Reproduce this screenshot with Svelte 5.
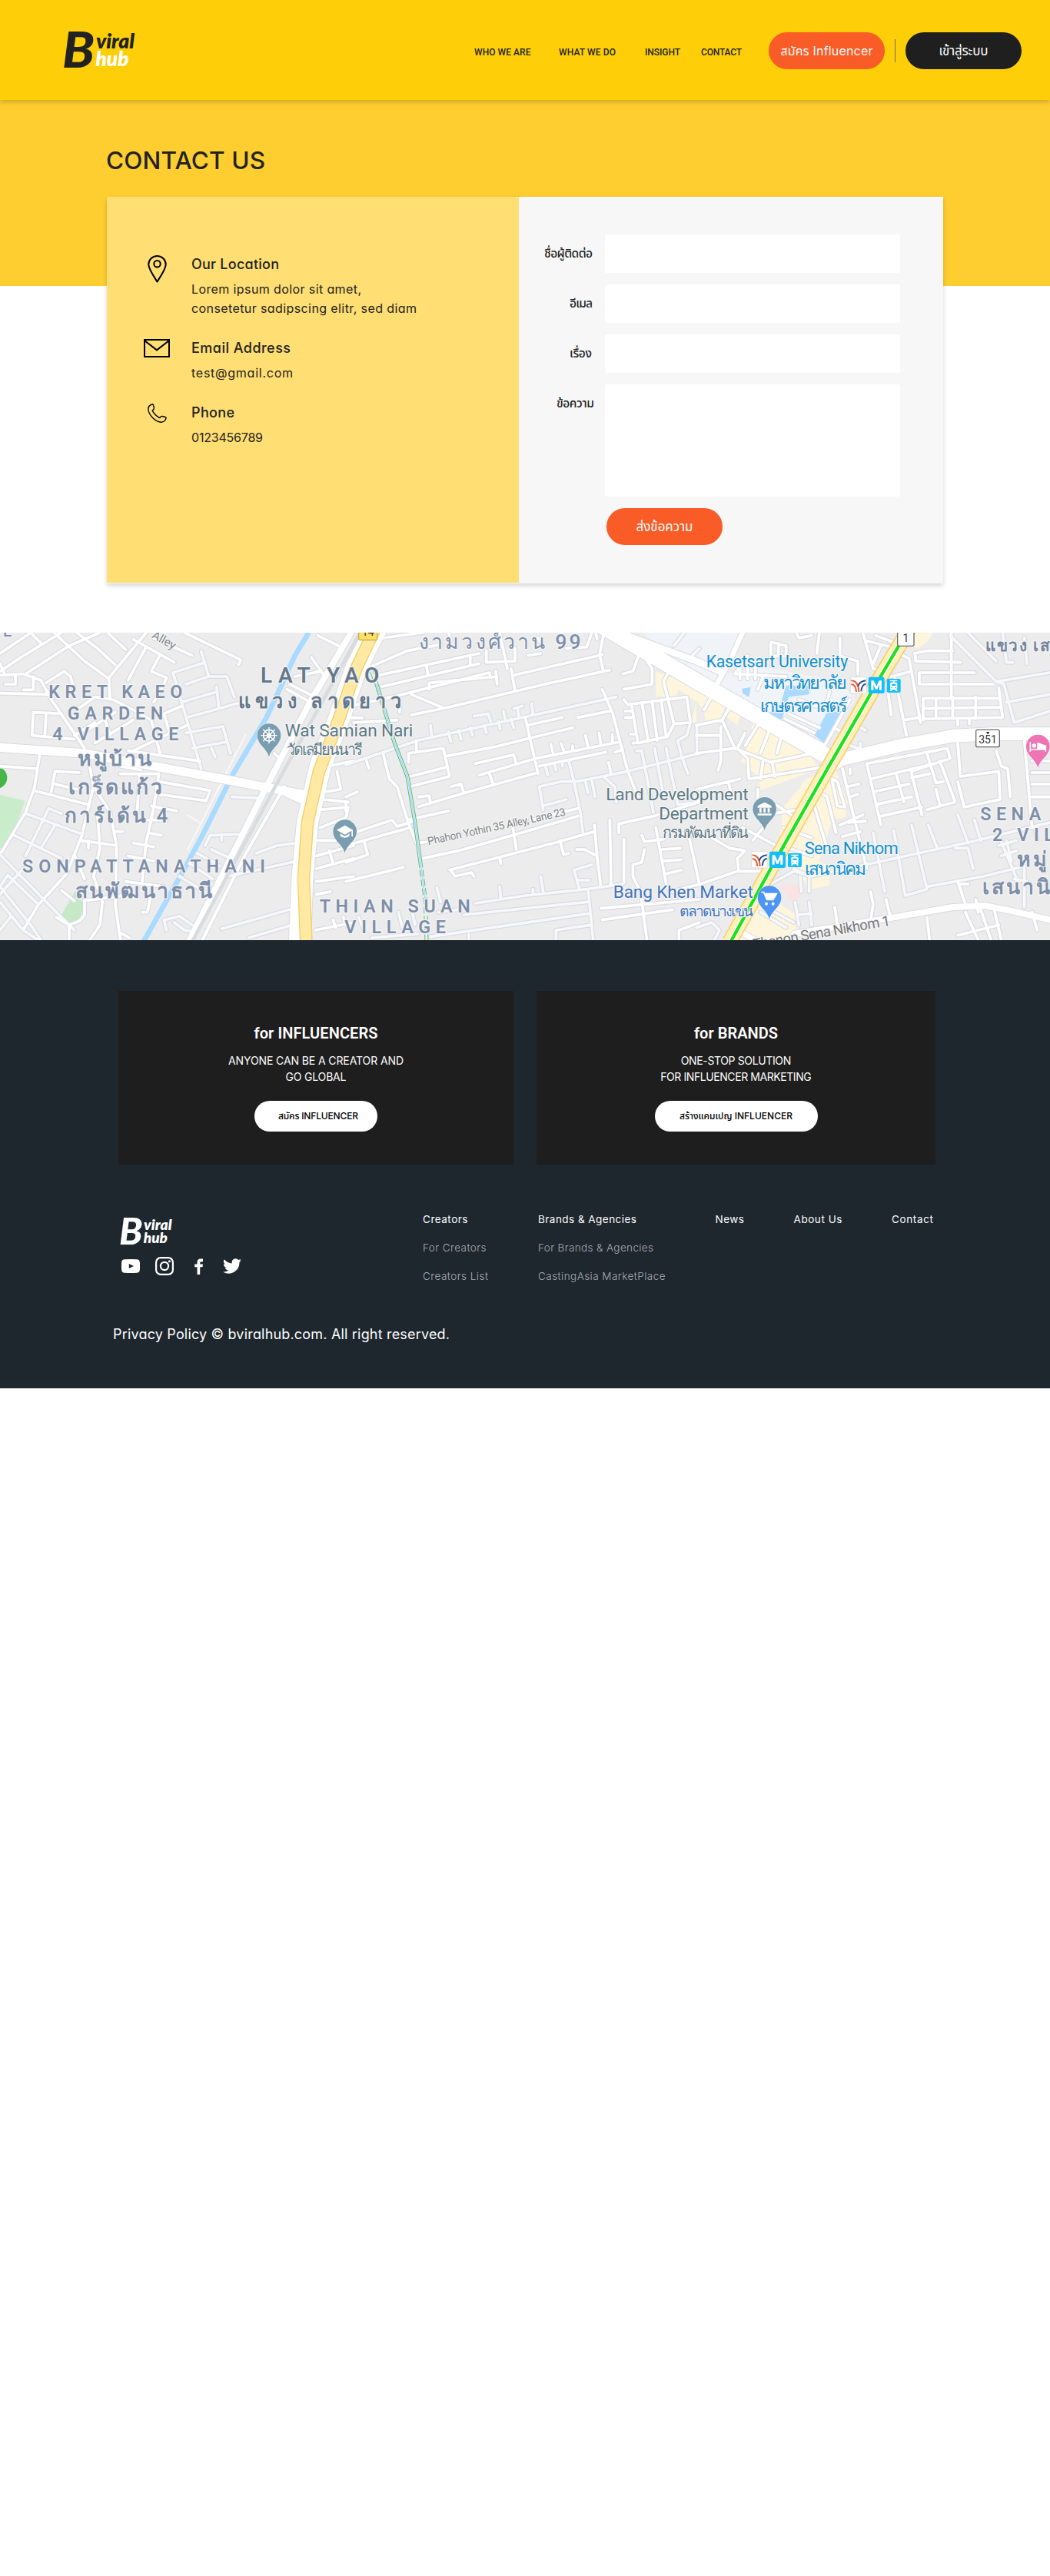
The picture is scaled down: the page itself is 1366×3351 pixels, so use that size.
<script>
  // Spreads a line of text over a given width with letter spacing.
  function fit(node, width) {
    node.style.letterSpacing = '0px';
    const a = node.getBoundingClientRect().width;
    node.style.letterSpacing = '1px';
    const glyphs = node.getBoundingClientRect().width - a;
    const s = glyphs > 1 ? (width - a) / (glyphs - 1) : 0;
    node.style.letterSpacing = `${s}px`;
    node.style.marginRight = `${-s}px`;
  }

  const nav = [['WHO WE ARE', 73.5], ['WHAT WE DO', 74], ['INSIGHT', 46], ['CONTACT', 53]];

  const contacts = [
    { icon: 'pin', title: ['Our Location', 114], lines: [['Lorem ipsum dolor sit amet,', 221], ['consetetur sadipscing elitr, sed diam', 293]] },
    { icon: 'mail', title: ['Email Address', 129], lines: [['test@gmail.com', 132]] },
    { icon: 'phone', title: ['Phone', 56], lines: [['0123456789', 93]] }
  ];

  const fields = [
    { label: 'ชื่อผู้ติดต่อ', w: 63, end: 0 },
    { label: 'อีเมล', w: 30, end: 0 },
    { label: 'เรื่อง', w: 29, end: 1 },
    { label: 'ข้อความ', w: 49, end: -2, tall: true }
  ];

  const promos = [
    { title: ['for INFLUENCERS', 161], lines: [['ANYONE CAN BE A CREATOR AND', 228], ['GO GLOBAL', 79]], cta: ['สมัคร INFLUENCER', 104], wide: false },
    { title: ['for BRANDS', 109], lines: [['ONE-STOP SOLUTION', 143.5], ['FOR INFLUENCER MARKETING', 196.5]], cta: ['สร้างแคมเปญ INFLUENCER', 147], wide: true }
  ];

  const links = [
    [['Creators', 58.5], ['For Creators', 82.5], ['Creators List', 85]],
    [['Brands & Agencies', 128], ['For Brands & Agencies', 150], ['CastingAsia MarketPlace', 165.5]],
    [['News', 37.5]],
    [['About Us', 63]],
    [['Contact', 54]]
  ];

  // The map is kept as three tiles, drawn at a third of their own units.
  const tiles = [
    {
      x: 0,
      roads: [
        'M0 190L90 130 240 39M120 39L160 80M100 200L270 90 390 39M210 39L330 150 420 215M300 39L380 100 450 165M420 39L490 105M570 39L425 215 430 300M520 65L680 155M570 95L500 225M625 125L590 190 650 215 640 240 600 310M720 39L940 145 930 165M600 60L750 128',
        'M0 205L90 200 160 225 200 300 330 490M0 275L190 280M60 205V240H20M130 210V262H90M180 235L250 190 275 210 290 260M0 120L120 39M0 160L20 205',
        'M675 195L800 155M785 112L815 210 725 240M675 195L785 570M815 210L885 210 915 290M710 310L845 270M845 250L855 335 730 370M855 335L960 305M725 430L870 405 900 510M750 490L885 465M825 490L840 525',
        'M130 350L240 355M130 350L125 440 290 455M180 355L175 440M300 340L370 290 440 300 520 340 590 380 625 510M290 440L370 390M340 420L450 350M400 350L430 440M370 470L520 380M520 500L730 400M640 355L710 325M640 355L665 440M500 500L780 540',
        'M0 560L140 570M155 515L135 640 100 740 10 890 0 900M200 660L215 580 310 585M215 630L300 650M130 655L345 710M350 560L365 640 345 720 320 830 260 980 150 1100 90 1200',
        'M100 745L320 825M190 725L100 910M215 790L160 880M190 725L240 745M55 830L240 920M0 905L180 1090 290 1200M30 985L150 1100M0 1030L120 1180 160 1239M90 1200L150 1239M0 1090L90 1200M40 1150L0 1200M90 960L0 1060M0 1030L30 985',
        'M365 640L430 740 455 870 450 1100 470 1239M380 740L390 880 365 990 400 1090 390 1180 350 1239M315 850L455 870M345 850V880M290 905L330 1000M240 1045L290 1085M330 1085V1140L310 1165 270 1180 220 1150M270 1180V1239M455 815H480M470 1210L505 1230',
        'M470 590H620L600 720 570 860 555 1010M620 620L820 655 805 695 620 670M590 715L690 735M575 770H650M580 820L630 830M520 860L600 875M500 910L600 930M490 1010L640 1030M545 590L535 740M470 560L550 575M330 1085L520 1060M590 1060L575 1130H555',
        'M905 680L1020 685M800 870L820 830 950 825M865 830V850M825 885L900 920M770 900L860 950M740 940L830 1000M700 990L800 1050M1000 900L1080 870 1160 860M890 990L1160 930M865 1195L1130 1120M970 1230L1140 1180M640 1160L700 1145 750 1180M640 1160L650 1200M680 1170L720 1200 750 1205',
        'M1120 260L1210 310M1130 240L1230 290M1150 210L1250 190M1215 135L1260 200M1240 50L1320 90M1070 510L1090 530',
        'M1280 560L1380 540M1315 580L1330 650 1270 660M1265 690L1360 700M1250 730L1360 720 1350 760 1250 800M1240 850L1320 850M1235 910L1380 870M1235 960L1380 920M1285 890L1300 940M1235 1060L1290 1050M1235 1010L1380 990M1230 1200L1380 1170M1300 1160L1310 1190M1340 1150L1350 1180'
      ],
      wide: [
        { d: 'M0 487L330 510 600 560 870 610 1180 670', w: 34 },
        { d: 'M1370 39L1210 310 1040 640 950 820 740 1239', w: 24 },
        { d: 'M1110 640L960 900 790 1239', w: 12 },
        { d: 'M1090 655L1190 700', w: 24 },
        { d: 'M1475 10L1385 190 1325 370 1250 560 1200 780 1180 1000 1170 1239', w: 84 }
      ]
    },
    {
      x: 450,
      roads: [
        'M100 170L240 110 370 85M130 205L520 120M140 250L520 160M485 125V160M315 170L320 205M140 60L300 39M0 330L200 285 560 195 565 215M325 260V235L590 210M585 190L590 240M255 280L375 330M400 39L410 70',
        'M255 360L400 330 800 235 1030 185M655 205L1000 125M645 180L660 265M1005 50L990 125 1005 190M548 110V155L660 150M600 39L630 180M660 100V150M710 128L760 120M975 39L980 65M750 60L770 95M860 100L940 95 960 39',
        'M0 555L280 460 690 370 1055 290M330 400L335 445M400 425L410 465M440 420L450 455M485 410L495 440M500 365L555 355 565 385M540 400L548 430M595 385L602 415M645 375L655 410M615 345L622 380M725 315L730 360M655 335L690 325M670 330L675 370',
        'M700 370L750 590M710 400L845 370M720 450L885 410M395 520L580 485 720 450M905 370L1030 345M1000 260L1040 350 1100 580 1140 680M740 530L1070 465M755 560L1015 505M800 475L810 515M840 470L852 505M885 480V495M935 440L945 485M988 430L995 475M1040 435V465M1050 505L1080 495M1025 545L1035 590',
        'M505 550L655 515 665 550M520 595L740 530M560 590L575 630M285 718L460 665 750 585M410 640L450 630 460 665M285 680L325 675 330 705M245 545V510L380 490 405 600 250 640M250 600L390 565M275 460V500',
        'M770 730L755 640 840 620 900 620 1100 580 1380 510M870 540L890 620 915 740 925 820M780 565L788 595M815 555L820 575M845 550V560M935 620L945 665M960 615L972 680M1010 605L1050 640 1055 700M770 715L860 690',
        'M240 770L400 735M0 830L180 770 200 795 265 775M145 510L170 610 200 640 240 770 275 860 320 855M0 870L250 800M70 850L85 905 0 935M0 1010L225 955M80 540L90 570M0 680L45 660M30 390L200 380M210 330V350M0 370L65 372M0 735V700',
        'M300 920L440 890 650 830 905 755M650 790L665 885M720 770L905 725M405 965L600 915 830 855 970 815M410 965L425 990 490 975 500 990M600 915L605 940M835 850L850 905 870 900M970 790L980 910 995 1030M900 885L930 885 980 910',
        'M505 1095L700 1065 940 1040 1080 1020M600 1030L605 1080M760 990L770 1050M730 1040V1060M890 965L960 945M890 965L910 1035M900 1005H950M460 1140L940 1090M330 1225L950 1135M355 1035L370 1090M360 1130L440 1120M820 1200L955 1180M820 1200V1239M945 1040L965 1239M480 1215V1239M100 1230L280 1215M205 1130L220 1190M255 1110L270 1180M50 1150L70 1200',
        'M1030 770L1035 1020M1085 845V1015M1065 820V785L1200 755 1380 700M1155 830L1165 855 1240 845M1210 800L1250 1020M1235 885L1305 880M1240 930L1310 925M1250 980L1310 965M1165 885L1155 935 1120 945 1120 990 1150 1050 1175 1239M995 1115L1380 1080M1000 1160L1275 1120M1300 1239V1200L1380 1170M1340 840L1380 1020M1270 1050L1380 1020',
        'M1080 200L1120 190 1140 135M1170 140L1195 180V240L1085 260M1085 300L1100 320 1330 290 1345 390 1280 395M1115 320L1140 470 1255 445 1280 395 1255 290M1155 310L1180 465M1195 305L1215 460M1230 300L1250 445M1090 345H1115M1090 370H1120M1110 435H1130M1255 200L1240 230 1255 290M1120 470L1140 468',
        'M1135 500L1155 500 1200 740M1205 490L1235 650M1250 490L1295 710 1380 700M1345 390L1330 440 1295 460 1310 520 1335 590M1370 400V510M1320 39L1280 90M1380 100L1350 130'
      ],
      wide: []
    },
    {
      x: 906,
      roads: [
        'M480 39L470 120M0 510L150 490 100 380 130 330M150 490L200 510 290 545 500 500M30 340L70 270M100 380L0 400M95 405V540L85 575M190 430L160 490 200 530 205 610 490 565M240 400L190 480M285 420L250 510M330 450L315 510M260 540L250 610M295 540L305 600M0 650L170 610M125 620L135 665M0 440H95',
        'M0 700L30 690M180 800L330 880M240 650V690M310 710L400 770M340 800L450 840M330 870L450 910M270 750L400 730M220 850L260 800M0 1025L160 970 300 970M60 840L130 880 190 890 160 920 165 970',
        'M290 1020L380 970 450 990 820 910 1050 860 1380 780M380 960L440 990M405 990L410 1050M440 1000V1050M385 1090L400 1180M440 1090L450 1180M400 1140L450 1135M250 1130L350 1190M270 1110L380 1170M0 1190L60 1170 90 1200 70 1239',
        'M650 39L690 180M660 70L760 95M700 50L780 80M690 180L710 185M720 90L690 160M560 60V130L630 150V200M290 75L350 90V130H290V75M320 80V130M390 39L400 60 450 50M150 200L350 210M170 170V220M200 170V220M230 170V220M260 210L240 260M200 130L150 200M345 375L460 430M360 355L480 410M340 390L500 480 600 300M540 410L570 430M400 300L500 340M520 270L500 340',
        'M770 110L830 140 875 390M740 210L760 360M775 215L820 440M760 210L840 190M810 380L870 370M850 120L900 110H1000M855 130V150L1030 155M870 195L1085 195M870 200V240L1160 240M995 39V290M885 295H1180M885 295V380M885 335L1185 330M890 375L1195 370 1180 255M935 295V375M1000 290V375M1090 290V375M1020 375V400M1065 375V395',
        'M990 50L1170 230 1380 195M1195 39L1210 155H1235M1170 230L1200 240 1240 390 1380 345M1210 310L1380 280M1060 39L1170 150M1280 60L1290 160M640 410L660 420M600 480L630 490M640 470V500',
        'M1020 470L1030 600 1180 580 1185 690 1045 720 1020 620M1170 500L1190 560 1215 570 1225 680M1280 460L1310 800M1310 540H1380M1310 585H1380M1310 630H1380M1310 680H1380',
        'M570 570L610 740 665 960M510 600L550 620 580 720 550 715 530 615M480 660L510 680 545 820M455 700L510 880M665 550L720 790M590 640L635 630M600 680L630 670M560 790L650 750M570 835L640 815M595 780L660 775M665 550L980 490 990 530 840 580M680 610L930 550M690 660L830 630M700 710L840 680M720 755L880 720M780 590L810 700M835 570L880 750M900 510L935 625 965 620M950 540L1010 700 900 730M935 650L950 710M840 605L910 590M600 570V590',
        'M690 820L735 1050M770 810L815 1065 900 1040 840 790M905 790L940 880M1020 750L1060 860M900 1030L1120 990 1280 950M1085 770L1110 850M1010 880H1060L1080 960M1180 830L1250 1000M1180 870L1250 850M1190 910L1250 890M1210 850L1230 930M1240 1000L1290 1010M1280 960V1110M1320 800L1330 850',
        'M740 1080L760 1160M680 1050L690 1100 680 1160M540 1110L550 1180M900 1150L910 1239M1020 1010L1050 1100M1090 1080L1100 1130M1050 1130L1100 1239M1110 1120L1150 1239M1160 1110L1190 1239M1020 1220L1180 1180M1030 1020H1060M1310 1130L1330 1200'
      ],
      wide: [
        { d: 'M-368 15L0 150 90 190', w: 26 },
        { d: 'M180 39L130 150 80 240', w: 20 },
        { d: 'M-400 -5L0 228 500 515 545 540', w: 62 },
        { d: 'M540 540L800 478 1000 442 1150 434H1380', w: 50 },
        { d: 'M380 1215L560 1185 800 1145 1000 1110 1130 1105 1230 1125 1380 1160', w: 24 },
        { d: 'M160 1200L240 1245', w: 22 }
      ]
    }
  ];

  const slate = '#7d8fa9';
  const teal = '#5d7b85';
  const sky = '#1390cf';
  const blue = '#4375bd';
  // [tile x, text, left, baseline, length, size, colour, weight]
  const places = [
    [0, 'E', 12, 55, 36, 60, slate, 500],
    [0, 'KRET KAEO', 190, 295, 522, 70, slate, 600],
    [0, 'GARDEN', 263, 377, 374, 70, slate, 600],
    [0, '4 VILLAGE', 205, 459, 492, 70, slate, 600],
    [0, 'หมู่บ้าน', 303, 557, 289, 80, slate, 600],
    [0, 'เกร็ดแก้ว', 268, 668, 364, 80, slate, 600],
    [0, 'การ์เด้น 4', 252, 779, 403, 78, slate, 600],
    [0, 'SONPATTANATHANI', 87, 976, 948, 70, slate, 600],
    [0, 'สนพัฒนาธานี', 293, 1073, 534, 80, slate, 600],
    [0, 'LAT YAO', 1017, 235, 463, 84, '#65788b', 600],
    [0, 'แขวง ลาดยาว', 930, 333, 635, 76, '#65788b', 600],
    [0, 'Wat Samian Nari', 1112, 445, 500, 68, teal, 400],
    [0, 'วัดเสมียนนารี', 1112, 517, 298, 60, teal, 400],
    [0, 'THIAN SUAN', 1247, 1130, 588, 70, slate, 600],
    [0, 'VILLAGE', 1345, 1212, 395, 70, slate, 600],
    [450, 'งามวงศ์วาน 99', 285, 103, 632, 80, slate, 500],
    [450, 'Land Development', 1015, 693, 556, 68, teal, 400],
    [450, 'Department', 1222, 768, 349, 68, teal, 400],
    [450, 'กรมพัฒนาที่ดิน', 1237, 840, 336, 60, teal, 400],
    [450, 'Bang Khen Market', 1043, 1075, 547, 68, blue, 400],
    [450, 'ตลาดบางเขน', 1302, 1147, 288, 58, blue, 400],
    [906, 'Kasetsart University', 38, 175, 554, 64, sky, 400],
    [906, 'มหาวิทยาลัย', 262, 257, 325, 70, sky, 500],
    [906, 'เกษตรศาสตร์', 248, 347, 344, 70, sky, 500],
    [906, 'Sena Nikhom', 422, 903, 366, 66, sky, 400],
    [906, 'เสนานิคม', 422, 983, 240, 68, sky, 500],
    [906, 'แขวง เส', 1128, 110, 252, 62, '#74859a', 600],
    [906, 'SENA', 1108, 772, 237, 70, slate, 600],
    [906, '2 VIL', 1155, 853, 240, 70, slate, 600],
    [906, 'หมู่', 1252, 950, 116, 80, slate, 600],
    [906, 'เสนานิ', 1117, 1060, 263, 80, slate, 600]
  ];

  const pins = [
    { x: 0, cx: 1050, cy: 440, fill: '#7a9eb0', kind: 'wheel' },
    { x: 0, cx: 1346, cy: 815, fill: '#7a9eb0', kind: 'cap' },
    { x: 906, cx: 266, cy: 727, fill: '#7a9eb0', kind: 'hall' },
    { x: 906, cx: 285, cy: 1073, fill: '#4c94f5', kind: 'cart' },
    { x: 906, cx: 1333, cy: 483, fill: '#ee74b4', kind: 'bed' }
  ];
  const stations = [[601, 212], [215, 893]];
  const at = (x) => `translate(${x} -13) scale(.33333)`;
</script>

{#snippet logo(dark, light)}
  <svg class="logo" viewBox="74 32 112 66" aria-label="Bviral hub">
    <text class="lb" x="81" y="88" font-size="65.5" textLength="42" lengthAdjust="spacingAndGlyphs" fill={dark}>B</text>
    <text class="lw" x="125" y="62.7" font-size="25.500" textLength="50" lengthAdjust="spacingAndGlyphs" fill={dark}>viral</text>
    <text class="lw" x="124.500" y="86" font-size="25.500" textLength="43" lengthAdjust="spacingAndGlyphs" fill={light}>hub</text>
  </svg>
{/snippet}

<div class="page">
  <header>
    <div class="home">{@render logo('#222', '#fff')}</div>
    <nav>
      {#each nav as [t, w]}<a href="#top"><span class="fit" use:fit={w}>{t}</span></a>{/each}
    </nav>
    <button class="pill orange"><span class="fit" use:fit={120}>สมัคร Influencer</span></button>
    <i class="sep"></i>
    <button class="pill black"><span class="fit" use:fit={64}>เข้าสู่ระบบ</span></button>
  </header>

  <section class="hero"><h1><span class="fit" use:fit={207}>CONTACT US</span></h1></section>

  <section class="card">
    <div class="info">
      {#each contacts as c}
        <div class="contact">
          <div class="ico">
            {#if c.icon === 'pin'}
              <svg width="25" height="36" viewBox="0 0 25 36" fill="none" stroke="#000" stroke-width="2"><path d="M12.5 34.5C10.5 31 1.3 18.5 1.3 12A11.2 11 0 0 1 23.7 12C23.7 18.5 14.5 31 12.5 34.5Z" stroke-linejoin="round" /><circle cx="12.5" cy="11.2" r="4.2" /></svg>
            {:else if c.icon === 'mail'}
              <svg width="34" height="24" viewBox="0 0 34 24" fill="none" stroke="#000" stroke-width="2"><path d="M1 1H33V23H1ZM1 2L17 14.4 33 2" /></svg>
            {:else}
              <svg width="25" height="25" viewBox="0 0 25 25" fill="none" stroke="#000" stroke-width="1.4" stroke-linejoin="round"><path d="M6.8.8C3 1.6.8 4 .9 7.2 1.4 15 10 23.8 17.8 24.2 21 24.3 23.7 21.8 24.2 18.2 22.5 17 19.5 16.2 17.6 16.6L15.8 18.6C12 17 7.6 12.6 6.2 9L8.2 7.2C8.6 5.2 8 2.4 6.8.8Z" /></svg>
            {/if}
          </div>
          <div>
            <h3><span class="fit" use:fit={c.title[1]}>{c.title[0]}</span></h3>
            {#each c.lines as [t, w]}<p><span class="fit" use:fit={w}>{t}</span></p>{/each}
          </div>
        </div>
      {/each}
    </div>
    <form>
      {#each fields as f}
        <label class:low={f.end > 0} class:over={f.end < 0}><span class="fit" use:fit={f.w}>{f.label}</span></label>
        <div class="box" class:tall={f.tall}></div>
      {/each}
      <button type="button" class="pill orange send"><span class="fit" use:fit={74}>ส่งข้อความ</span></button>
    </form>
  </section>

  <svg class="map" viewBox="0 0 1366 400">
    <rect width="1366" height="400" fill="#ececec" />
    <g transform={at(0)}>
      <path d="M0 672L98 695 60 800 10 880H0Z" fill="#c9edcb" />
      <path d="M295 1045L325 1100 315 1150 270 1175 235 1150Z" fill="#c5e8c5" />
      <circle cx="-15" cy="605" r="43" fill="#46b649" />
    </g>
    <g transform={at(906)}>
      <path d="M-210 39H180L120 200 250 170 560 230 620 300 500 480 -100 130Z" fill="#f0f3f7" />
      <path d="M-158 190L0 250V390H-20L0 310-70 260-78 285-158 290ZM0 190L60 220 120 300 90 390 40 390 30 350 0 300ZM120 320L175 350 160 400 120 370ZM220 390L440 510 480 570 250 655 240 600 175 540 200 480ZM340 700L430 610 540 570 590 700 580 760 530 770 480 930 520 950V1025L440 1040 400 980 320 880ZM270 1060L330 1100 390 1140V1239H150ZM850 39H925L900 75 870 100 820 90Z" fill="#fdf5dc" />
      <path d="M250 655L415 630 340 720 300 770 250 700Z" fill="#ececec" />
      <path d="M178 257L212 252 205 290 180 275ZM350 245H440V280L360 290 335 375 310 380 285 350 325 330ZM510 350L565 345 545 420 500 470 460 440Z" fill="#aadaff" />
      <path d="M315 1030L395 1018 408 1070 360 1085 350 1050Z" fill="#fbe3e3" />
    </g>
    <g transform={at(0)}>
      <path d="M1205 39L1150 130 1110 220 1040 370 910 590 880 650 790 830 720 960 560 1245" fill="none" stroke="#a9daff" stroke-width="20" />
      <path d="M960 435L730 890M730 750L780 780" fill="none" stroke="#fafafa" stroke-width="5" />
    </g>
    {#each tiles as t}
      <g transform={at(t.x)} class="casing">
        {#each t.roads as d}<path {d} stroke-width="18" />{/each}
        {#each t.wide as r}<path d={r.d} stroke-width={r.w + 6} />{/each}
      </g>
    {/each}
    {#each tiles as t}
      <g transform={at(t.x)} class="fill">
        {#each t.roads as d, i}<path {d} stroke-width="11" class:soft={i % 3 === 2} />{/each}
      </g>
    {/each}
    {#each tiles as t}
      <g transform={at(t.x)} class="fill">
        {#each t.wide as r}<path d={r.d} stroke-width={r.w} />{/each}
      </g>
    {/each}
    <g transform={at(0)} fill="none">
      <path d="M1405 39L1290 250 1090 610 750 1245" stroke="#d9dcde" stroke-width="14" />
      <path d="M1470 10L1390 180 1325 370 1245 580 1200 780 1185 1000 1195 1245" stroke="#f3cd68" stroke-width="50" />
      <path d="M1470 10L1390 180 1325 370 1245 580 1200 780 1185 1000 1195 1245" stroke="#ffe9a3" stroke-width="42" />
    </g>
    <g transform={at(450)} fill="none">
      <path d="M100 190L120 240 190 470 240 600 270 780 290 930" stroke="#5db974" stroke-width="15" />
      <path d="M290 930L310 1080 315 1245" stroke="#5db974" stroke-width="15" stroke-dasharray="26 10" />
      <path d="M100 190L120 240 190 470 240 600 270 780 290 930 310 1080 315 1245" stroke="#eef2ee" stroke-width="9" />
      <path d="M120 240L190 470 240 600 270 780 290 930 310 1080" stroke="#a9daff" stroke-width="5" />
      <rect x="50" y="20" width="72" height="48" rx="4" fill="#ffe066" stroke="#b89a2c" stroke-width="3" />
      <text x="86" y="52" class="badge">14</text>
    </g>
    <g transform={at(906)} fill="none">
      <path d="M845 0L710 225 500 590 290 960 130 1245" stroke="#f5cd6d" stroke-width="60" />
      <path d="M845 0L710 225 500 590 290 960 130 1245" stroke="#fff0b5" stroke-width="51" />
      <path d="M790 90L710 225 500 590 290 960 134 1245" stroke="#fff" stroke-width="21" />
      <path d="M790 90L710 225 500 590 290 960 134 1245" stroke="#1fe01f" stroke-width="13" />
      <rect x="785" y="20" width="64" height="71" rx="6" fill="#fff" stroke="#6b6b6b" stroke-width="4" />
      <text x="817" y="75" class="badge">1</text>
      <rect x="1091" y="418" width="92" height="67" rx="6" fill="#fff" stroke="#6b6b6b" stroke-width="4" />
      <text x="1137" y="472" class="badge">351</text>
      <path d="M1131 426H1144L1140 434H1135Z" fill="#333" />
    </g>

    {#each places as [x, t, px, py, len, size, color, weight]}
      <text class="place" transform={at(x)} x={px} y={py} textLength={len} font-size={size} font-weight={weight} fill={color}>{t}</text>
    {/each}
    <g transform={at(0)}><text class="place" transform="translate(590 58) rotate(29)" font-size="46" fill="#85888b">Alley</text></g>
    <g transform={at(450)}><text class="place" transform="translate(322 868) rotate(-12.2)" textLength="550" font-size="42" fill="#7f8386">Phahon Yothin 35 Alley, Lane 23</text></g>
    <g transform={at(906)}><text class="place" transform="translate(225 1275) rotate(-10)" textLength="542" font-size="56" fill="#74787b">Thanon Sena Nikhom 1</text></g>

    {#each pins as p}
      <g transform={at(p.x)}>
        <g transform={`translate(${p.cx} ${p.cy})`}>
          <path d="M0 84C-8 50-46 36-46 0A46 46 0 0 1 46 0C46 36 8 50 0 84Z" fill={p.fill} stroke="#fff" stroke-opacity=".6" stroke-width="4" paint-order="stroke" />
          {#if p.kind === 'wheel'}
            <g fill="none" stroke="#fff" stroke-width="5"><circle r="22" /><circle r="7" /><path d="M0-32V32M-32 0H32M-23-23L23 23M23-23L-23 23" stroke-width="4" /></g>
          {:else if p.kind === 'cap'}
            <path d="M-32-6L0-24 32-6 0 12ZM-18 8V18Q0 30 18 18V8L0 18ZM26-4H31V20H26Z" fill="#fff" />
          {:else if p.kind === 'hall'}
            <path d="M-27-12L0-26 27-12V-5H-27ZM-20-3H-12V14H-20ZM-4-3H4V14H-4ZM12-3H20V14H12ZM-27 18H27V25H-27Z" fill="#fff" />
          {:else if p.kind === 'cart'}
            <path d="M-32-21H-22L-10 8H18M-20-15H28L18 2H-12" fill="none" stroke="#fff" stroke-width="5" /><path d="M-20-15H28L18 2H-12Z" fill="#fff" /><circle cx="-12" cy="24" r="6" fill="#fff" /><circle cx="14" cy="24" r="6" fill="#fff" />
          {:else}
            <path d="M-30-17V20M-30 12H30V20M30 12V-2L0-12V10" fill="none" stroke="#fff" stroke-width="5" /><circle cx="-15" cy="-3" r="8" fill="#fff" /><path d="M-2-12L30-2V12H-2Z" fill="#fff" />
          {/if}
        </g>
      </g>
    {/each}

    {#each stations as [sx, sy]}
      <g transform={at(906)}>
        <g transform={`translate(${sx} ${sy})`}>
          <rect width="63" height="64" rx="5" fill="#fff" stroke="#cfd2d6" stroke-width="2" />
          <path d="M3 14Q32 16 33 58M3 28Q22 30 23 58" fill="none" stroke="#f0562f" stroke-width="6" />
          <path d="M60 14Q34 18 30 36M60 27Q44 30 42 56" fill="none" stroke="#22508f" stroke-width="6" />
          <rect x="70" width="63" height="64" rx="7" fill="#14bdfb" />
          <path d="M81 51V14H91L101.5 36 112 14H122V51H113V30L105 48H98L90 30V51Z" fill="#fff" />
          <rect x="142" y="7" width="54" height="54" rx="6" fill="#14bdfb" />
          <path d="M155 12H183V17H172V21H179Q183 21 183 26V45Q183 48 180 48L185 55H178L175 50H163L160 55H153L158 48Q155 48 155 45V26Q155 21 159 21H166V17H155Z" fill="#fff" />
          <path d="M161 27H177V34H161ZM160 40H164V44H160ZM174 40H178V44H174Z" fill="#14bdfb" />
        </g>
      </g>
    {/each}
  </svg>

  <footer>
    <div class="promos">
      {#each promos as p}
        <div class="promo">
          <h2><span class="fit" use:fit={p.title[1]}>{p.title[0]}</span></h2>
          {#each p.lines as [t, w]}<p><span class="fit" use:fit={w}>{t}</span></p>{/each}
          <button class="cta" class:wide={p.wide}><span class="fit" use:fit={p.cta[1]}>{p.cta[0]}</span></button>
        </div>
      {/each}
    </div>
    <div class="bottom">
      <div class="brand">
        <div class="mini">{@render logo('#fff', '#fff')}</div>
        <div class="social">
          <svg width="24" height="24" viewBox="0 0 24 24"><path fill="#fff" fill-rule="evenodd" d="M4 3.2Q12 2.6 20 3.2 23.5 3.5 23.9 7 24.3 12 23.9 17 23.5 20.5 20 20.8 12 21.4 4 20.8 .5 20.5 .1 17-.3 12 .1 7 .5 3.5 4 3.2ZM9.8 8.9V15.1L16 12Z" /></svg>
          <svg width="24" height="24" viewBox="0 0 24 24" fill="none" stroke="#fff"><rect x="1.1" y="1.1" width="21.8" height="21.8" rx="6" stroke-width="2.2" /><circle cx="12" cy="12" r="5.1" stroke-width="2.2" /><circle cx="18.4" cy="5.7" r="1.5" fill="#fff" stroke="none" /></svg>
          <svg width="24" height="24" viewBox="0 0 24 24"><path fill="#fff" d="M10.500 23V13.200H7.200V9.600H10.500V7Q10.500 2.500 15 2.500H18V6.200H16Q14.200 6.200 14.200 7.800V9.600H18L17.500 13.200H14.200V23Z" /></svg>
          <svg width="24" height="24" viewBox="0 0 24 24"><path fill="#fff" d="M24 4.600a10 10 0 0 1-2.800.8 5 5 0 0 0 2.100-2.700 10 10 0 0 1-3.100 1.200 4.900 4.900 0 0 0-8.400 4.500A14 14 0 0 1 1.700 3.200a4.900 4.900 0 0 0 1.500 6.500 5 5 0 0 1-2.200-.6v.1a4.900 4.900 0 0 0 3.900 4.800 5 5 0 0 1-2.200.1 4.900 4.900 0 0 0 4.600 3.400A9.900 9.900 0 0 1 0 19.500 14 14 0 0 0 21.500 7.100 10 10 0 0 0 24 4.600Z" /></svg>
        </div>
      </div>
      <div class="links">
        {#each links as col}
          <ul>{#each col as [t, w]}<li><span class="fit" use:fit={w}>{t}</span></li>{/each}</ul>
        {/each}
      </div>
    </div>
    <p class="legal"><span class="fit" use:fit={438}>Privacy Policy © bviralhub.com. All right reserved.</span></p>
  </footer>
</div>

<style>
  :global(body) { background: #fff; }
  .page { width: 1366px; min-height: 3351px; color: #222; font-family: Inter, 'Noto Sans Thai', sans-serif; font-feature-settings: 'cv11'; overflow: hidden; }
  h1, h2, h3, p, ul { margin: 0; padding: 0; font-weight: 400; list-style: none; }
  button { border: 0; padding: 0; font-family: inherit; font-feature-settings: inherit; }
  a { color: inherit; text-decoration: none; }
  .fit { display: inline-block; white-space: nowrap; }

  header { position: relative; z-index: 1; display: flex; align-items: center; box-sizing: border-box; height: 130px; padding: 2px 37px 0 74px; background: #fece08; box-shadow: 0 3px 6px rgba(0, 0, 0, .18); }
  .home { width: 543px; height: 66px; margin-top: -2px; }
  .logo { display: block; height: 100%; }
  .lb, .lw { font-family: Lato, sans-serif; font-style: italic; font-weight: 900; }
  .lw { font-weight: 800; }
  nav { display: grid; grid-template-columns: 110px 112px 73px 88px; padding-top: 3px; font: 500 12px/16px Roboto, sans-serif; }
  .pill { width: 151px; height: 48px; border-radius: 24px; color: #fff; font-size: 16px; line-height: 24px; }
  .orange { background: #f95c26; }
  .black { background: #1f1f1f; }
  .black, .send { font-size: 17px; }
  .sep { width: 1px; height: 30px; margin: 0 13px; background: #707070; }

  .hero { box-sizing: border-box; height: 242px; padding: 59px 0 0 138px; background: #fecd30; }
  h1 { font-size: 31.5px; line-height: 40px; font-weight: 500; }

  .card { position: relative; display: grid; grid-template-columns: 536px 1fr; width: 1088px; height: 503px; margin: -116px 0 0 139px; background: #f7f7f7; box-shadow: 0 3px 6px rgba(0, 0, 0, .16); }
  .info { display: flex; flex-direction: column; gap: 27px; box-sizing: border-box; height: 502px; padding: 76px 0 0 48px; background: #ffde73; }
  .contact { display: grid; grid-template-columns: 34px 1fr; column-gap: 28px; }
  .ico { display: flex; justify-content: center; height: 32px; }
  .ico svg { flex: none; }
  h3 { margin-bottom: 8px; font-size: 18px; font-weight: 500; line-height: 24px; }
  .info p { font-size: 16px; line-height: 25px; }
  form { display: grid; grid-template-columns: 96px 384px; grid-auto-rows: max-content; column-gap: 16px; row-gap: 15px; padding-top: 49px; }
  label { text-align: right; font-size: 15.5px; font-weight: 500; line-height: 50px; }
  .low { padding-right: 1px; }
  .over { margin-right: -2px; }
  .box { height: 50px; border-radius: 3px; background: #fff; }
  .tall { height: 146px; }
  .send { grid-column: 2; margin-left: 2px; }

  .map { display: block; width: 1366px; height: 400px; margin-top: 64px; }
  .casing { fill: none; stroke: #dadbe1; stroke-linecap: round; stroke-linejoin: round; }
  .fill { fill: none; stroke: #fff; stroke-linecap: round; stroke-linejoin: round; }
  .soft { stroke: #f7f8fb; }
  .place { font-family: Roboto, sans-serif; stroke: #f4f4f5; stroke-width: 8px; stroke-linejoin: round; paint-order: stroke; }
  .badge { fill: #333; font-family: Roboto, sans-serif; font-size: 42px; text-anchor: middle; }

  footer { box-sizing: border-box; height: 583px; padding-top: 66px; background: #1e262e; color: #fff; }
  .promos { display: grid; grid-template-columns: 514px 519px; column-gap: 30px; margin-left: 154px; }
  .promo { display: flex; flex-direction: column; align-items: center; box-sizing: border-box; height: 226px; padding-top: 43px; background: #1e1e1e; }
  h2 { margin-bottom: 13px; font: 600 20px/24px Roboto, sans-serif; }
  .promo p { font-size: 14px; line-height: 21px; }
  .cta { width: 160px; height: 40px; margin-top: 21px; padding-left: 6px; border-radius: 20px; background: #fff; color: #000; font-size: 12px; font-weight: 500; }
  .wide { width: 212px; padding-left: 0; }
  .bottom { display: grid; grid-template-columns: 400px 1fr; box-sizing: border-box; height: 207px; padding: 61px 0 0 150px; }
  .brand { padding-top: 2px; }
  .mini { height: 48px; }
  .social { display: flex; gap: 20px; margin: 9px 0 0 8px; }
  .links { display: grid; grid-template-columns: 150px 230.5px 102px 127.5px 60px; }
  .links li { height: 37px; font-size: 13.5px; line-height: 20px; }
  .links li + li { color: #a9adb1; font-weight: 300; }
  .links, .links span { font-feature-settings: normal; }
  .legal { padding-left: 147px; font-size: 18px; line-height: 28px; }
</style>
